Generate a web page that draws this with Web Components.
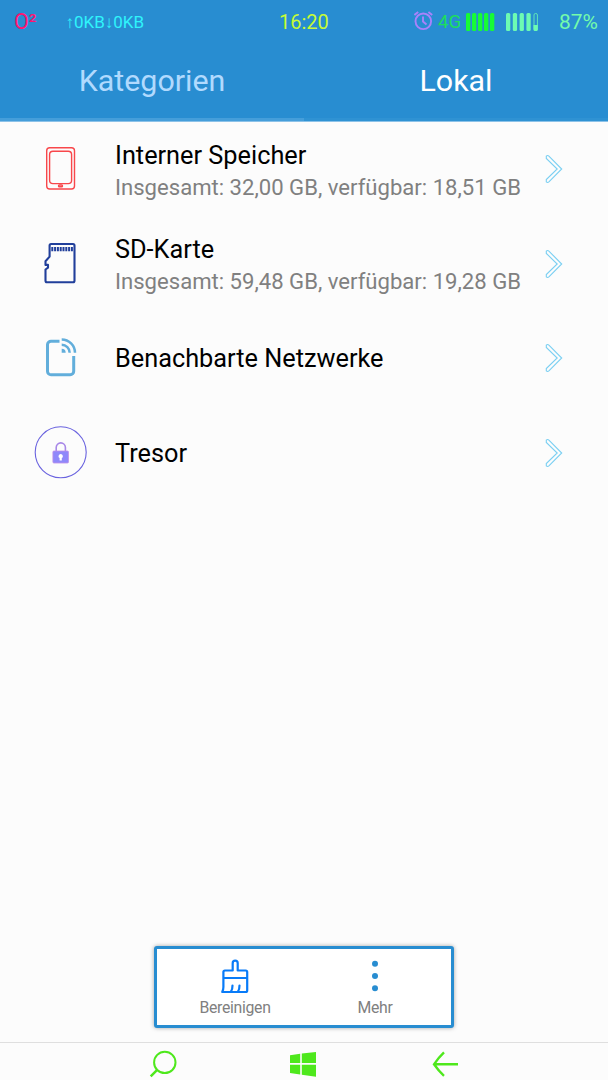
<!DOCTYPE html>
<html lang="de">
<head>
<meta charset="utf-8">
<title>Dateimanager</title>
<style>
    body {
        margin: 0;
        height: 1080px;
        overflow: hidden;
        background: #fcfcfc;
        font-family: Roboto, "Noto Sans", sans-serif;
    }
</style>
</head>
<body>
<file-manager></file-manager>

<script>
class BaseElement extends HTMLElement {
    constructor() {
        super()
        this.attachShadow( { mode: "open" } )
    }
    connectedCallback() {
        const template = document.createElement('template')
        template.innerHTML = `<style>${this.getStyle()}</style>${this.getTemplate()}`
        this.shadowRoot.replaceChildren(template.content.cloneNode(true))
    }
}

const icons = {
    phone: `
        <g fill="none" stroke="#f8474b" stroke-width="1.4">
            <rect x="16.7" y="8.7" width="27.8" height="41.3" rx="3"/>
            <rect x="19.6" y="12.2" width="22" height="32.4" rx="3.4"/>
            <rect x="28.5" y="46" width="4" height="1.8" rx=".9"/>
        </g>`,
    sdcard: `
        <g transform="translate(0 .9)">
            <path d="M19.6 10.6a1.5 1.5 0 0 1 1.5-1.5H43a1.5 1.5 0 0 1 1.5 1.5v35.2a1.5 1.5 0 0 1-1.5 1.5H17a1.5 1.5 0 0 1-1.5-1.5V34.6l2.5-1.8v-2.8h-2.5v-3.7l4.1-4.6z" fill="none" stroke="#213f9b" stroke-width="2.1" stroke-linejoin="round"/>
            <path d="M21.3 14.2H43" stroke="#213f9b" stroke-width="4.2" stroke-dasharray="2 .8"/>
        </g>`,
    network: `
        <g transform="translate(0 1)">
            <g fill="none" stroke="#62aedb" stroke-width="3">
                <path d="M29.5 12.2H21a3.5 3.5 0 0 0-3.5 3.5v26.6a3.5 3.5 0 0 0 3.5 3.5h19.2a3.5 3.5 0 0 0 3.5-3.5V27"/>
                <path d="M31.7 10.4A13.3 13.3 0 0 1 45 23.7" stroke-width="2.5"/>
                <path d="M31.7 15.7a8 8 0 0 1 8 8" stroke-width="2.5"/>
            </g>
            <path d="M31.7 19.7a4 4 0 0 1 4 4h-4z" fill="#62aedb"/>
        </g>`,
    safe: `
        <circle cx="30.7" cy="29.3" r="25.5" fill="none" stroke="#6a63df" stroke-width="1.1"/>
        <path d="M26.2 28.5v-4a4.6 4.6 0 0 1 9.2 0v4" fill="none" stroke="#a888e8" stroke-width="1.6"/>
        <rect x="22.9" y="28" width="15.6" height="12" rx="1" fill="#8f88fa" stroke="#bf90ea" stroke-width=".8"/>
        <path d="M30.7 31a2.2 2.2 0 0 1 1.1 4.1v2.4h-2.2v-2.4a2.2 2.2 0 0 1 1.1-4.1z" fill="#fff"/>`
}

class StatusBar extends BaseElement {
    getStyle() {
        return `
            :host {
                display: grid;
                grid-template-columns: 65px 214px 135px 24px 28px 40px 53px 39px;
                align-items: center;
                height: 43px;
                white-space: nowrap;
                font-size: 20px;
                line-height: 24px;
            }
            svg { display: block; }
            .carrier { padding-left: 14px; color: #ff1471; font-size: 21.5px; }
            .rate { color: #2ff4fb; font-size: 17px; padding: 1px 0 0 .5px; }
            .time { color: #c6fb35; }
            .net { color: #1cdf5c; font-size: 18.5px; padding-top: 1px; }
            .percent { color: #74fbab; overflow: hidden; font-size: 21px; }
        `
    }
    getTemplate() {
        const bars = (count, step, width) => Array.from({ length: count }, (_, i) =>
            `<rect x="${i * step}" y="0" width="${width}" height="18" rx="1.5"/>`).join('')
        return `
            <span class="carrier">O²</span>
            <span class="rate">↑0KB↓0KB</span>
            <span class="time">16:20</span>
            <svg width="20" height="22" viewBox="0 0 20 22" fill="none" stroke="#a982fb">
                <circle cx="9.3" cy="10.3" r="7.8" stroke-width="1.9"/>
                <path d="M9 5.6v5l3.5 2.8M.4 4L4.2 .9M14.4 .9L18.2 4" stroke-width="1.9"/>
            </svg>
            <span class="net">4G</span>
            <svg width="29" height="18" fill="#17fb35">${bars(5, 6, 4.3)}</svg>
            <svg width="32" height="18" fill="#6dfbb2">
                ${bars(4, 6.8, 4.3)}
                <rect x="28" y=".5" width="3.4" height="17" rx="1.5" fill="none" stroke="#6dfbb2" stroke-width=".8"/>
                <path d="M27.5 12h4.3v4.5a1.5 1.5 0 0 1-1.5 1.5H29a1.5 1.5 0 0 1-1.5-1.5z"/>
            </svg>
            <span class="percent">87%</span>
        `
    }
}
customElements.define('status-bar', StatusBar)

class TabItem extends BaseElement {
    getStyle() {
        return `
            :host {
                display: flex;
                justify-content: center;
                flex: 1;
                box-sizing: border-box;
                height: 78px;
                padding-top: 20px;
                font-size: 30.4px;
                line-height: 36px;
                color: #b1dafe;
                border-bottom: 3px solid #459eda;
            }
            :host([active]) {
                color: #fff;
                border-bottom-color: #2f92d3;
            }
        `
    }
    getTemplate() {
        return `<slot></slot>`
    }
}
customElements.define('tab-item', TabItem)

class StorageRow extends BaseElement {
    getStyle() {
        return `
            :host {
                display: grid;
                grid-template-columns: 85px 430px 1fr;
                align-items: center;
                height: 94.6px;
                padding-left: 30px;
                white-space: nowrap;
            }
            svg { display: block; }
            .title { font-size: 25.3px; line-height: 32px; color: #000; padding-top: 2px; }
            .info { font-size: 22.1px; line-height: 30px; color: #808080; }
            :host([info]) .title { padding-top: 3px; }
        `
    }
    getTemplate() {
        const info = this.getAttribute('info')
        return `
            <svg width="60" height="60" viewBox="0 0 60 60">${icons[this.getAttribute('icon')]}</svg>
            <div>
                <div class="title"><slot></slot></div>
                ${info ? `<div class="info">${info}</div>` : ''}
            </div>
            <svg width="18" height="30" viewBox="0 0 18 30">
                <path d="M1.3 2.1Q2.6 .9 3.9 2.1L16.7 15 3.9 27.9Q2.6 29.1 1.3 27.9V25.6L12.2 15 1.3 4.4z" fill="none" stroke="#7acff2" stroke-width="1.1"/>
            </svg>
        `
    }
}
customElements.define('storage-row', StorageRow)

class ActionButton extends BaseElement {
    getStyle() {
        return `
            :host {
                display: flex;
                flex-direction: column;
                align-items: center;
                width: 140px;
                font-size: 15.8px;
                letter-spacing: -.3px;
                line-height: 20px;
                color: #808080;
            }
            ::slotted(svg) { display: block; margin-bottom: 2px; }
        `
    }
    getTemplate() {
        return `<slot name="icon"></slot><slot></slot>`
    }
}
customElements.define('action-button', ActionButton)

class NavBar extends BaseElement {
    getStyle() {
        return `
            :host {
                display: grid;
                grid-template-columns: 140px 140px 143px;
                justify-content: start;
                justify-items: center;
                padding-left: 93px;
                box-sizing: border-box;
                height: 38px;
                border-top: 1px solid #dfdfdf;
            }
            svg { display: block; margin-top: 7px; }
        `
    }
    getTemplate() {
        return `
            <svg width="28" height="30" viewBox="0 0 28 30" fill="none" stroke="#4ee81c">
                <circle cx="15.8" cy="12.4" r="10.7" stroke-width="2"/>
                <path d="M8.2 19.9L1.7 26.4" stroke-width="2.5"/>
            </svg>
            <svg width="28" height="30" viewBox="0 0 28 30" fill="#4ee81c">
                <path d="M1 5.2L11.2 3.8v9.3H1zM12.8 3.6L27 2v11.1H12.8zM1 14.8h10.2v9.6L1 23zM12.8 14.8H27v12l-14.2-2.1z"/>
            </svg>
            <svg width="28" height="30" viewBox="0 0 28 30" fill="none" stroke="#4ee81c" stroke-width="2.4">
                <path d="M27 14.3H3M13 2.3Q7.5 7.5 3 14.3q4.5 6.5 10 11.5"/>
            </svg>
        `
    }
}
customElements.define('nav-bar', NavBar)

class FileManager extends BaseElement {
    getStyle() {
        return `
            :host {
                display: flex;
                flex-direction: column;
                width: 608px;
                height: 1080px;
            }
            header { background: #288dd1; border-bottom: 1px solid #8cc2e8; }
            .tabs { display: flex; }
            main { flex: 1; }
            .toolbar {
                display: flex;
                justify-content: center;
                align-self: center;
                box-sizing: border-box;
                width: 300px;
                height: 82.5px;
                padding: 10px 0 0 2px;
                margin-bottom: 14px;
                background: #fff;
                border: 3px solid #288dd1;
                border-radius: 3px;
                box-shadow: 0 0 4px rgba(0, 0, 0, .35);
            }
        `
    }
    getTemplate() {
        return `
            <header>
                <status-bar></status-bar>
                <div class="tabs">
                    <tab-item>Kategorien</tab-item>
                    <tab-item active>Lokal</tab-item>
                </div>
            </header>
            <main>
                <storage-row icon="phone" info="Insgesamt: 32,00 GB, verfügbar: 18,51 GB">Interner Speicher</storage-row>
                <storage-row icon="sdcard" info="Insgesamt: 59,48 GB, verfügbar: 19,28 GB">SD-Karte</storage-row>
                <storage-row icon="network">Benachbarte Netzwerke</storage-row>
                <storage-row icon="safe">Tresor</storage-row>
            </main>
            <div class="toolbar">
                <action-button>
                    <svg slot="icon" width="28" height="37" viewBox="0 0 28 37" fill="none" stroke="#087bf8" stroke-width="2.2" stroke-linejoin="round" stroke-linecap="round">
                        <path d="M11.7 11.5V4.2a2.5 2.5 0 0 1 5 0v7.3H24.700a1.500 1.500 0 0 1 1.500 1.500v18.500a1.500 1.500 0 0 1-1.500 1.500H1.200q1.200-2 1.200-5V13a1.500 1.500 0 0 1 1.500-1.500H11.700M2.400 19H26.200M11.500 26.500q0 4-1.500 6M18.500 26.500q0 4-1.500 6"/>
                    </svg>
                    Bereinigen
                </action-button>
                <action-button>
                    <svg slot="icon" width="28" height="37" viewBox="0 0 28 37" fill="#288dd1">
                        <circle cx="14" cy="4.8" r="3"/>
                        <circle cx="14" cy="17" r="3"/>
                        <circle cx="14" cy="29.3" r="3"/>
                    </svg>
                    Mehr
                </action-button>
            </div>
            <nav-bar></nav-bar>
        `
    }
}
customElements.define('file-manager', FileManager)
</script>
</body>
</html>
